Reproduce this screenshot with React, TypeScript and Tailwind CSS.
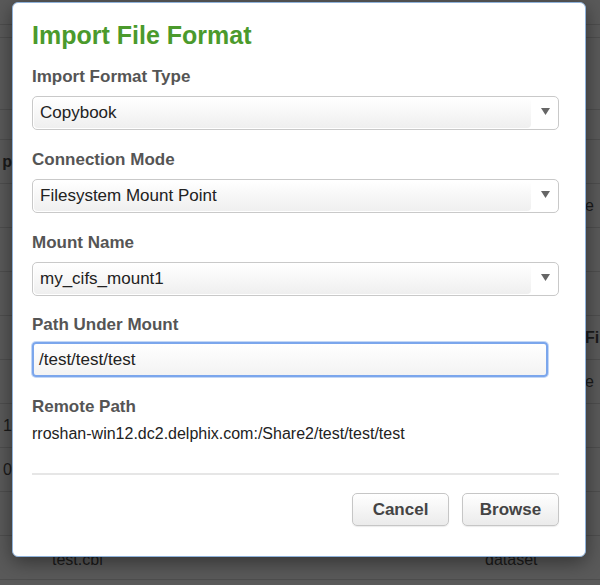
import { ReactNode } from 'react';

const rows = [
  { left: 'p', right: '', bold: true },
  { left: '', right: 'e', bold: false },
  { left: '', right: '', bold: false },
  { left: '', right: '', bold: false },
  { left: '', right: 'File', bold: true },
  { left: '', right: 'e', bold: false },
  { left: '1', right: '', bold: false },
  { left: '0', right: '', bold: false },
  { left: '', right: '', bold: false },
  { left: '', right: '', bold: false, name: 'test.cbl', kind: 'dataset' },
];

function Arrow() {
  return (
    <svg width="9" height="7" viewBox="0 0 9 7">
      <path d="M0 0 H9 L4.5 7 Z" fill="#666" />
    </svg>
  );
}

function Label({ children, className = '' }: { children: ReactNode; className?: string }) {
  return <div className={`text-[17px] leading-[20px] font-bold text-[#555] ${className}`}>{children}</div>;
}

function Select({ value }: { value: string }) {
  return (
    <div className="mt-[9px] flex h-[34px] w-full rounded-[5px] border border-[#c9c9c9] bg-white">
      <div className="m-px flex flex-1 items-center rounded-[4px] bg-gradient-to-b from-white to-[#efefef] pl-[6px] text-[17px] text-[#222]">
        {value}
      </div>
      <div className="flex w-[26px] items-center justify-center pb-[3px]">
        <Arrow />
      </div>
    </div>
  );
}

function Button({ children }: { children: ReactNode }) {
  return (
    <button className="h-[33px] w-[97px] rounded-[5px] border border-[#c6c6c6] bg-gradient-to-b from-white to-[#ebebeb] text-[17px] font-bold text-[#444] shadow-[0_1px_1px_rgba(0,0,0,0.08)]">
      {children}
    </button>
  );
}

export default function App() {
  return (
    <div
      className="relative h-[585px] w-[600px] overflow-hidden bg-[#5a5a5a]"
      style={{ fontFamily: '"Liberation Sans", Arial, sans-serif' }}
    >
      {/* Table behind the overlay */}
      <div className="text-[16px] text-[#1b1b1b]">
        <div className="h-[25px] border-b border-[#4e4e4e]" />
        <div className="h-[13px] border-b border-[#4e4e4e]" />
        <div className="h-[72px] border-b border-[#4e4e4e]" />
        <div className="h-[30px] border-b border-[#4e4e4e]" />
        {rows.map((r, i) => (
          <div key={i} className="flex h-[44px] items-center border-b border-[#4e4e4e]">
            <div className="flex w-[12px] justify-end overflow-hidden whitespace-nowrap">
              <span className={r.bold ? 'font-bold' : ''}>{r.left}</span>
            </div>
            <div className="w-[40px]" />
            <div className="flex-1 pt-[4px]">{r.name}</div>
            <div className="w-[100px] pt-[4px]">{r.kind}</div>
            <div className="flex w-[15px] overflow-hidden whitespace-nowrap">
              <span className={r.bold ? 'font-bold' : ''}>{r.right}</span>
            </div>
          </div>
        ))}
      </div>

      {/* Dialog */}
      <div className="absolute left-[12px] top-[2px] w-[574px] rounded-[6px] border border-[#8fb2da] bg-white pl-[19px] pr-[26px] pt-[17px] pb-[30px] shadow-[0_5px_20px_rgba(0,0,0,0.45)]">
        <h1 className="text-[25px] leading-[30px] font-bold text-[#4b9a2c]">Import File Format</h1>

        <Label className="mt-[17px]">Import Format Type</Label>
        <Select value="Copybook" />

        <Label className="mt-[20px]">Connection Mode</Label>
        <Select value="Filesystem Mount Point" />

        <Label className="mt-[20px]">Mount Name</Label>
        <Select value="my_cifs_mount1" />

        <Label className="mt-[19px]">Path Under Mount</Label>
        <div className="mt-[7px] flex h-[35px] w-[516px] items-center rounded-[4px] border-2 border-[#7ba6ec] bg-gradient-to-b from-white to-[#f3f3f3] pl-[5px] text-[17px] text-[#222] shadow-[0_0_0_1px_rgba(123,166,236,0.45)]">
          /test/test/test
        </div>

        <Label className="mt-[20px]">Remote Path</Label>
        <div className="mt-[7px] text-[16px] leading-[20px] text-[#222]">
          rroshan-win12.dc2.delphix.com:/Share2/test/test/test
        </div>

        <div className="mt-[29px] h-[2px] bg-[#e6e6e6]" />

        <div className="mt-[18px] flex justify-end gap-[13px]">
          <Button>Cancel</Button>
          <Button>Browse</Button>
        </div>
      </div>
    </div>
  );
}
